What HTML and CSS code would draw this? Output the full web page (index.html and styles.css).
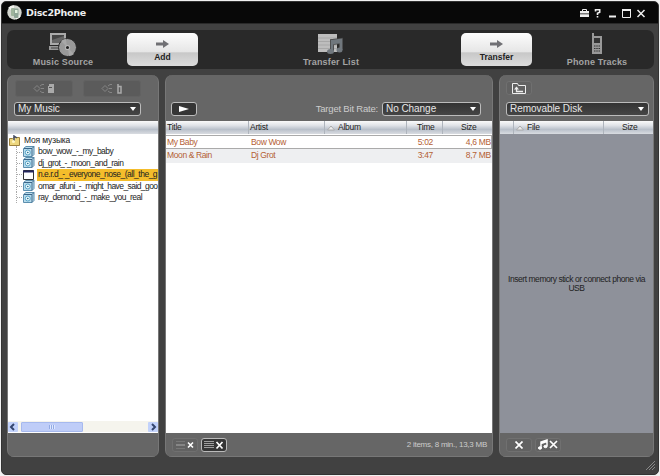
FILE: index.html
```html
<!DOCTYPE html>
<html lang="en">
<head>
<meta charset="utf-8">
<title>Disc2Phone</title>
<link rel="stylesheet" href="styles.css">
</head>
<body>
<div class="window">
  <header class="titlebar">
    <svg class="logo" width="15" height="15" viewBox="0 0 15 15"><circle cx="7.5" cy="7.5" r="7.2" fill="#d3d6cf"/><path d="M7 7 1 3A7 7 0 0 1 7 .4zM8 8l6 3a7 7 0 0 1-5 3.5z" fill="#f2f3ee"/><rect x="4" y="3" width="4" height="8" rx="1" fill="#9fb49c"/><rect x="7" y="3.500" width="4.500" height="9.500" rx="1" fill="#8fa596"/><path d="M8 5h2.500v3H8z" fill="#e5f3e0"/></svg>
    <h1>Disc2Phone</h1>
    <svg class="controls" width="68" height="12" viewBox="0 0 68 12" fill="none" stroke="#eee"><path d="M1 4h9v2.500H1zM1 7.200h9V10H1z" fill="#eee" stroke="none"/><path d="M3.500 4V2.500h4V4"/><path d="M16.500 4.500V2.700h4.200v2.500l-2.200 1V8M18.500 9v1.500" stroke-width="1.600"/><path d="M30 9.500h7" stroke-width="2"/><path d="M43.500 2.500h8v8h-8z"/><path d="M43 3h9" stroke-width="2"/><path d="m58.500 3 7 7m0-7-7 7" stroke-width="1.500"/></svg>
  </header>
  <nav class="toolbar">
    <div class="stage source">
      <svg width="28" height="25" viewBox="0 0 28 25"><path d="M1 1h16v12H1z" fill="#aaa"/><path d="M3 3h12v8H3z" fill="#444"/><path d="M3 8 15 4v7H3z" fill="#666"/><path d="M0 14h17v4H0z" fill="#999"/><path d="M2 16h8" stroke="#444"/><circle cx="18.500" cy="15.500" r="9" fill="#999" stroke="#292929"/><path d="M18 15 12 9a9 9 0 0 1 5-2zM19 16l6 6a9 9 0 0 1-5 2z" fill="#a8a8a8"/><circle cx="18.500" cy="15.500" r="2.600" fill="#bbb"/><circle cx="18.500" cy="15.500" r="1.500" fill="#222"/></svg>
      <span>Music Source</span>
    </div>
    <button class="action"><svg width="13" height="8" viewBox="0 0 13 8"><path d="M0 2.500h7V0l6 4-6 4V5.500H0z" fill="#707074"/></svg><span>Add</span></button>
    <div class="stage list">
      <svg width="26" height="22" viewBox="0 0 26 22"><path d="M0 1h19v18H0z" fill="#bdbdbd"/><path d="M0 5h19M0 8.500h19M0 12h19M0 15.500h19" stroke="#a7a7a7"/><path d="M14 18V8l9-1v10M14 10l9-1" stroke="#444" stroke-width="4" fill="none"/><path d="M14 18V8l9-1v10M14 10l9-1" stroke="#70777d" stroke-width="2.500" fill="none"/><ellipse cx="12.500" cy="18.500" rx="3.500" ry="2.500" fill="#70777d"/><ellipse cx="21.500" cy="17" rx="3" ry="2.500" fill="#70777d"/></svg>
      <span>Transfer List</span>
    </div>
    <button class="action"><svg width="13" height="8" viewBox="0 0 13 8"><path d="M0 2.500h7V0l6 4-6 4V5.500H0z" fill="#707074"/></svg><span>Transfer</span></button>
    <div class="stage phone">
      <svg width="12" height="22" viewBox="0 0 12 22"><path d="M1 0h2v3h8v18H1z" fill="#999"/><path d="M3 5h6v5H3z" fill="#333"/><path d="M3 13h6M3 15.500h6M3 18h6" stroke="#333" stroke-width="1.200" stroke-dasharray="1.500 .75"/></svg>
      <span>Phone Tracks</span>
    </div>
  </nav>
  <main class="panels">
    <section class="panel">
      <div class="head">
        <div class="tools">
          <button class="dim"><svg width="23" height="11" viewBox="0 0 23 11" fill="none" stroke="#858585"><path d="M1 5.500 4 2.500l3 3-3 3zM7 3l2-1.500h2M8 5.500h3M7 8l2 1.500h2"/><path d="M15 3h1V1h5v9h-6z" fill="#aaa" stroke="none"/><path d="M16 4.500h3" stroke="#555"/></svg></button>
          <button class="dim"><svg width="23" height="11" viewBox="0 0 23 11" fill="none" stroke="#858585"><path d="M1 5.500 4 2.500l3 3-3 3zM7 3l2-1.500h2M8 5.500h3M7 8l2 1.500h2"/><path d="M17 1v9h3V3.500h-3" stroke="#aaa" stroke-width="1.500"/></svg></button>
        </div>
        <div class="select">My Music<i></i></div>
      </div>
      <div class="columns"></div>
      <div class="body tree">
        <div class="root"><svg width="12" height="12" viewBox="0 0 12 12"><path d="M.5 3.500h3l1-1h6v8H.5z" fill="#ecd67e" stroke="#9c813e"/><path d="M5 6V1l3 2" fill="none" stroke="#444d66" stroke-width="1.500"/><circle cx="4.500" cy="6.500" r="1.500" fill="#fff7c5"/></svg><span>Моя музыка</span></div>
        <div class="node"><svg width="12" height="12"><use href="#album"/></svg><span>bow_wow_-_my_baby</span></div>
        <div class="node"><svg width="12" height="12"><use href="#album"/></svg><span>dj_grot_-_moon_and_rain</span></div>
        <div class="node picked"><svg width="12" height="12" viewBox="0 0 12 12"><path d="M.5 1.500h10v9H.5z" fill="#fff" stroke="#333"/><path d="M0 2.500h11" stroke="#24265e" stroke-width="2"/></svg><span>n.e.r.d_-_everyone_nose_(all_the_g</span></div>
        <div class="node"><svg width="12" height="12"><use href="#album"/></svg><span class="long">omar_afuni_-_might_have_said_goo</span></div>
        <div class="node last"><svg width="12" height="12"><use href="#album"/></svg><span>ray_demond_-_make_you_real</span></div>
        <div class="scroll"><b><svg width="10" height="10"><path d="M6 2 3 5l3 3" fill="none" stroke="#34466f" stroke-width="2"/></svg></b><div class="thumb"><i></i></div><b><svg width="10" height="10"><path d="m4 2 3 3-3 3" fill="none" stroke="#34466f" stroke-width="2"/></svg></b></div>
      </div>
      <footer></footer>
    </section>
    <section class="panel">
      <div class="head middle">
        <button class="play"><svg width="10" height="8"><path d="M0 1v6l10-3z" fill="#fff"/></svg></button>
        <label>Target Bit Rate:</label>
        <div class="select rate">No Change<i></i></div>
      </div>
      <div class="columns songs"><span>Title</span><span>Artist</span><span class="sort"><svg width="8" height="6"><path d="m.5 5 3.500-4 3.500 4z" fill="#eee" stroke="#aaa"/></svg>Album</span><span class="time">Time</span><span class="size">Size</span></div>
      <div class="body">
        <div class="songs row focus"><span>My Baby</span><span>Bow Wow</span><span></span><span class="num">5:02</span><span class="num">4,6 MB</span></div>
        <div class="songs row alt"><span>Moon &amp; Rain</span><span>Dj Grot</span><span></span><span class="num">3:47</span><span class="num">8,7 MB</span></div>
      </div>
      <footer>
        <button class="tool"><svg width="18" height="10" viewBox="0 0 18 10"><path d="M0 1.500h9M0 8.500h9" stroke="#777"/><path d="M0 5h9" stroke="#aaa"/><path d="m12 2.500 5 5m0-5-5 5" stroke="#fff" stroke-width="1.600"/></svg></button>
        <button class="tool active"><svg width="20" height="10" viewBox="0 0 20 10"><path d="M0 1.500h10M0 3.500h10M0 5.500h10M0 7.500h10" stroke="#aaa" stroke-width=".9"/><path d="m12.500 2 6 6.500m0-6.500-6 6.500" stroke="#fff" stroke-width="1.700"/></svg></button>
        <span class="summary">2 items, 8 min., 13,3 MB</span>
      </footer>
    </section>
    <section class="panel">
      <div class="head device">
        <button class="tool up"><svg width="14" height="11" viewBox="0 0 14 11" fill="none" stroke="#eee"><path d="M.5 10.500v-10h5l1 2h7v8z"/><path d="M4.500 4v4.500H11" stroke-width="1.300"/><path d="M2 6.500 4.500 3.500 7 6.500z" fill="#eee" stroke="none"/></svg></button>
        <div class="select">Removable Disk<i></i></div>
      </div>
      <div class="columns files"><span></span><span class="sort"><svg width="8" height="6"><path d="m.5 5 3.500-4 3.500 4z" fill="#eee" stroke="#aaa"/></svg>File</span><span class="size">Size</span></div>
      <div class="body empty"><p>Insert memory stick or connect phone via<br>USB</p></div>
      <footer>
        <button class="tool"><svg width="8" height="8"><path d="m.5.500 7 7m0-7-7 7" stroke="#fff" stroke-width="1.700"/></svg></button>
        <button class="tool"><svg width="20" height="11" viewBox="0 0 20 11" fill="none" stroke="#fff"><path d="M3 9V3l6-2v6M3 4.500l6-2" stroke-width="1.500"/><ellipse cx="2" cy="9" rx="1.600" ry="1.200" fill="#fff"/><ellipse cx="7.500" cy="7.500" rx="1.600" ry="1.200" fill="#fff"/><path d="m12 2 7 7m0-7-7 7" stroke-width="1.700"/></svg></button>
      </footer>
    </section>
  </main>
  <svg class="grip" width="9" height="9"><path d="M0 9 9 0M3 9l6-6M6 9l3-3" stroke="#888"/></svg>
</div>
<svg width="0" height="0"><defs><g id="album"><path d="M.5 2.500 3 .5h8v8l-2 2H.5z" fill="#b9dcec" stroke="#5c8fae"/><path d="M9 2.500v8M1 2.500h8l2-2" stroke="#3c6689" fill="none"/><circle cx="4.800" cy="6.500" r="2.500" fill="#e7f8fc" stroke="#55a3c8"/><circle cx="4.800" cy="6.500" r=".8" fill="#246485"/></g></defs></svg>
</body>
</html>
```
FILE: styles.css
```css
* { box-sizing: border-box; }
body { margin: 0; width: 660px; height: 476px; overflow: hidden; background: #f1f1f1; font: 9px/12px "Liberation Sans", Arial, sans-serif; color: #222; }
button { padding: 0; margin: 0; border: 0; font: inherit; display: flex; align-items: center; justify-content: center; }
svg { display: block; flex: none; }
span { white-space: nowrap; }
.window { position: relative; margin: 1px; width: 658px; height: 474px; background: #414141; border-radius: 5px; border: 1px solid #333; overflow: hidden; }
.titlebar { height: 22px; background: #080808; border-bottom: 1px solid #292929; display: flex; align-items: center; padding: 0 11px 0 5px; }
h1 { margin: 0 auto 0 4px; color: #eee; font: bold 9.5px/14px "DejaVu Sans", sans-serif; letter-spacing: -.25px; }
.toolbar { height: 39px; margin: 6px 4px 0 5px; border-radius: 7px; background: #292929; display: flex; align-items: center; }
.stage { display: flex; flex-direction: column; align-items: center; justify-content: flex-end; height: 39px; color: #a4a4a4; font-weight: bold; font-size: 9px; line-height: 11px; letter-spacing: .17px; padding-bottom: 1px; }
.source { width: 120px; padding-right: 8px; }
.list { width: 263px; padding-left: 3px; }
.list svg { margin-bottom: 2px; }
.phone { width: 122px; padding-left: 8px; }
.phone svg { margin-bottom: 2px; }
.action { width: 71px; height: 33px; border-radius: 5px; flex-direction: column; gap: 3px; padding-top: 3px; background: linear-gradient(#fcfcfc, #e6e6e6 57%, #c8c8c8 60%, #ddd); color: #222; font: bold 8.5px/12px "Liberation Sans", sans-serif; }
.panels { display: grid; grid-template-columns: 152px 328px 155px; gap: 6px; margin: 6px 5px 0; }
.panel { height: 382px; border-radius: 7px; background: #666; border-left: 1px solid #777; border-right: 1px solid #777; display: grid; grid-template-rows: 46px 13px 299px 24px; grid-template-columns: minmax(0, 1fr); overflow: hidden; }
.head { padding: 5px 17px 0 6px; }
.tools { display: flex; gap: 10px; height: 16px; margin: 0 0 6px 1px; }
.dim { width: 58px; height: 17px; border-radius: 3px; background: #5b5b5b; border: 1px solid #626262; }
.select { height: 14px; border: 1px solid #bcbcbc; border-radius: 3px; background: linear-gradient(#333, #454545); color: #e6e6e6; font-size: 10px; line-height: 12px; padding: 0 4px 0 3px; letter-spacing: -.05px; display: flex; align-items: center; justify-content: space-between; white-space: nowrap; }
.select i { border: 3px solid transparent; border-top: 4px solid #fff; border-bottom: 0; }
.middle { display: flex; align-items: flex-start; padding: 27px 11px 0 5px; }
.play { width: 26px; height: 14px; border: 1px solid #bcbcbc; border-radius: 3px; background: #353535; }
label { color: #ccc; font-size: 9.5px; line-height: 14px; letter-spacing: -.2px; margin-left: auto; margin-right: 4px; white-space: nowrap; }
.rate { width: 99px; }
.columns { background: linear-gradient(#fafafa, #dfe2e7 35%, #b9c0ca 65%, #d9dce1); }
.columns span { border-right: 1px solid #aeb4bc; padding-left: 1px; font-size: 8.5px; line-height: 13px; letter-spacing: -.25px; }
.columns span:last-child { border: 0; }
.songs { display: grid; grid-template-columns: 83px 76px 82px 36px 49px; }
.songs .sort, .files .sort { padding-left: 2px; }
.sort { display: flex; align-items: center; gap: 3px; }
.columns .time { padding-left: 10px; }
.columns .size { padding-left: 18px; }
.body { background: #fff; overflow: hidden; position: relative; }
.tree { padding: 1px 0 0 1px; font-size: 8.5px; line-height: 11.400px; }
.root, .node { display: flex; align-items: center; height: 11.400px; }
.root { gap: 3px; }
.root span { letter-spacing: -.15px; }
.node { margin-left: 7px; gap: 3px; border-left: 1px dotted #aaa; }
.node::before { content: ""; flex: none; width: 5px; border-top: 1px dotted #aaa; margin-right: -2px; }
.node span { letter-spacing: -.52px; }
.node .long { letter-spacing: -.58px; }
.node.picked span { background: #f4bd2b; padding: 0 2px 0 1px; margin-left: -1px; letter-spacing: -.5px; }
.scroll { position: absolute; left: 0; right: 0; bottom: 1px; height: 11px; background: #f5f4ed; display: flex; align-items: center; }
.scroll b { width: 10px; height: 10px; background: #c2d2fb; border-radius: 1px; }
.scroll .thumb { width: 62px; height: 10px; margin: 0 auto 0 3px; background: #bfcdf8; border: 1px solid #a6b9ee; border-radius: 1px; display: flex; justify-content: center; align-items: center; }
.thumb i { width: 6px; height: 4px; background: repeating-linear-gradient(90deg, #91aae4 0 1px, #dfe8ff 1px 2px); }
.row { height: 14px; line-height: 13px; color: #b46034; font-size: 8.5px; letter-spacing: -.38px; padding-left: 1px; }
.focus { border: 1px solid #aaa; border-left: 0; margin-top: 1px; line-height: 12px; }
.row span:nth-child(2) { padding-left: 1px; }
.alt { background: #eeeff1; }
.row .num { text-align: right; letter-spacing: -.3px; padding-right: 2px; }
.row .num:nth-child(4) { padding-right: 11px; }
footer { display: flex; align-items: center; padding: 0 6px; gap: 3px; border-bottom: 1px solid #777; }
.tool { width: 26px; height: 14px; border: 1px solid #707070; border-radius: 3px; background: #626262; }
.active { border-color: #bbb; background: #363636; }
.summary { margin-left: auto; color: #ccc; font-size: 8px; letter-spacing: -.25px; margin-right: -1px; }
.device { padding: 6px 4px 0 6px; }
.up { margin-bottom: 7px; }
.files { grid-template-columns: 14px 90px 1fr; display: grid; }
.empty { background: #8e919a; }
.empty p { margin: 141px 0 0; text-align: center; line-height: 9px; font-size: 8.5px; letter-spacing: -.45px; white-space: nowrap; }
.grip { position: absolute; right: 3px; bottom: 4px; }
```
